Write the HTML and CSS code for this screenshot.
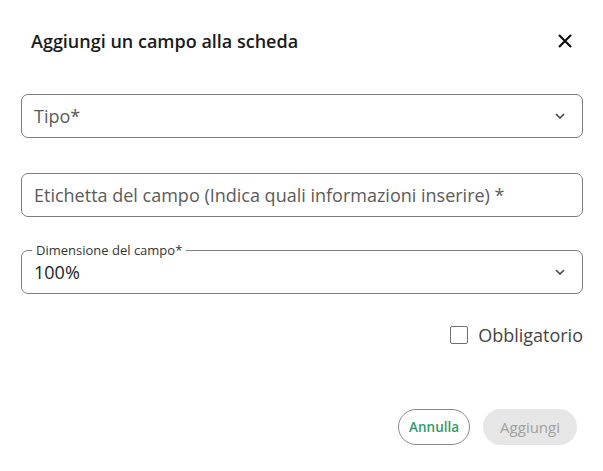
FILE: index.html
```html
<!DOCTYPE html>
<html lang="it">
  <head>
    <meta charset="UTF-8" />
    <meta name="viewport" content="width=device-width, initial-scale=1.0" />
    <title>Aggiungi un campo alla scheda</title>
    <link rel="stylesheet" href="styles.css">
  </head>
  <body>
    <div class="dialog">
      <div class="dialog-header">
        <p class="dialog-title">Aggiungi un campo alla scheda</p>
        <button class="close-button" aria-label="Chiudi">
          <svg width="16" height="16" viewBox="0 0 16 16">
            <path d="M2 2 L14 14 M14 2 L2 14" stroke="#111" stroke-width="2.2" fill="none" />
          </svg>
        </button>
      </div>

      <div class="field field-select">
        <span class="field-placeholder">Tipo*</span>
        <svg class="chevron" width="10" height="6" viewBox="0 0 10 6">
          <path d="M1 1 L5 5 L9 1" stroke="#444" stroke-width="1.6" fill="none" />
        </svg>
      </div>

      <div class="field field-text">
        <span class="field-placeholder">Etichetta del campo (Indica quali informazioni inserire) *</span>
      </div>

      <fieldset class="field field-select field-filled">
        <legend class="field-legend">Dimensione del campo*</legend>
        <span class="field-value">100%</span>
        <svg class="chevron" width="10" height="6" viewBox="0 0 10 6">
          <path d="M1 1 L5 5 L9 1" stroke="#444" stroke-width="1.6" fill="none" />
        </svg>
      </fieldset>

      <label class="checkbox-row">
        <span class="checkbox-box"></span>
        <span class="checkbox-label">Obbligatorio</span>
      </label>

      <div class="dialog-actions">
        <button class="cancel-button">Annulla</button>
        <button class="add-button" disabled>Aggiungi</button>
      </div>
    </div>
  </body>
</html>
```

FILE: styles.css
```css
body {
  margin: 0;
  background-color: white;
  font-family: "Open Sans", Arial, sans-serif;
  color: #222;
}

.dialog {
  padding: 0 20px 0 21px;
}

.dialog-header {
  display: flex;
  justify-content: space-between;
  align-items: center;
  padding-top: 28px;
  padding-left: 10px;
  padding-right: 10px;
}

.dialog-title {
  margin: 0;
  font-size: 18px;
  line-height: 26px;
  font-weight: 600;
  color: #1a1a1a;
}

.close-button {
  display: flex;
  background-color: transparent;
  border: none;
  padding: 0;
  cursor: pointer;
}

.field {
  box-sizing: border-box;
  display: flex;
  align-items: center;
  height: 44px;
  margin: 0;
  padding: 0 12px;
  border: 1px solid #7d7d7d;
  border-radius: 7px;
  font-size: 18px;
}

.field-select {
  justify-content: space-between;
  margin-top: 40px;
}

.field-text {
  margin-top: 35px;
}

.field-placeholder {
  color: #5a5a5a;
}

.chevron {
  margin-right: 5px;
}

.field-filled {
  position: relative;
  margin-top: 33px;
  padding-top: 0;
  padding-bottom: 0;
  min-width: 0;
}

.field-legend {
  position: absolute;
  top: -9px;
  left: 10px;
  padding: 0 4px;
  background-color: white;
  font-size: 13px;
  line-height: 16px;
  color: #333;
}

.field-value {
  color: #222;
}

.checkbox-row {
  display: flex;
  justify-content: flex-end;
  align-items: center;
  gap: 10px;
  margin-top: 29px;
  cursor: pointer;
}

.checkbox-box {
  box-sizing: border-box;
  width: 18px;
  height: 18px;
  border: 1.5px solid #6f6f6f;
  border-radius: 2px;
}

.checkbox-label {
  font-size: 18px;
  line-height: 24px;
  color: #444;
}

.dialog-actions {
  display: flex;
  justify-content: flex-end;
  gap: 13px;
  margin-top: 62px;
  padding-right: 6px;
}

.cancel-button {
  height: 36px;
  padding: 0 10px;
  background-color: white;
  border: 1px solid #8a8a8a;
  border-radius: 18px;
  font-family: inherit;
  font-size: 13.5px;
  font-weight: 600;
  color: #2f9a6e;
  cursor: pointer;
}

.add-button {
  height: 36px;
  padding: 0 17px;
  background-color: #e6e6e6;
  border: none;
  border-radius: 18px;
  font-family: inherit;
  font-size: 15px;
  color: #a0a0a0;
}
```
